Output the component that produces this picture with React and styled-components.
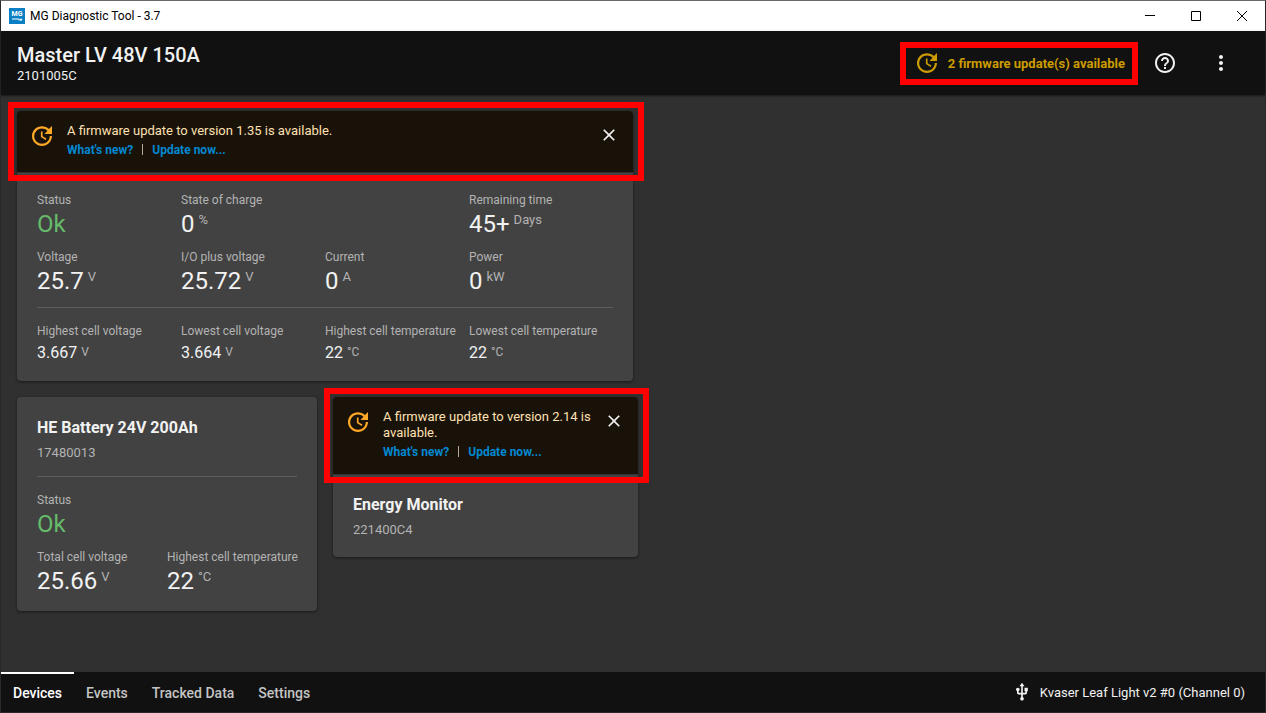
import React from "react";
import styled, { createGlobalStyle, css } from "styled-components";
import { MdHelpOutline, MdMoreVert, MdClose, MdUsb } from "react-icons/md";

const GlobalStyle = createGlobalStyle`
  *, *::before, *::after { box-sizing: border-box; }
  body { margin: 0; background: #2b2829; font-family: Roboto, "Liberation Sans", sans-serif; color: #f2f2f2; }
  button { font: inherit; color: inherit; background: none; border: 0; padding: 0; cursor: pointer; }
  h1, h2, p, dl, dt, dd { margin: 0; font-weight: inherit; }
  svg { display: block; flex: none; }
`;

const Window = styled.div`
  min-height: 100vh;
  display: flex;
  flex-direction: column;
  border: 1px solid #2b2829;
  border-top-color: #6b6869;
  background: #303030;
`;

const TitleBar = styled.div`
  height: 30px;
  display: flex;
  align-items: center;
  padding-left: 8px;
  background: #fff;
  color: #000;
  font-size: 12px;
  line-height: 16px;
`;

const WindowTitle = styled.span`
  flex: 1;
  padding-left: 5px;
`;

const WindowButton = styled.button`
  width: 46px;
  height: 30px;
  display: grid;
  place-items: center;
`;

const Header = styled.header`
  height: 64px;
  display: flex;
  align-items: center;
  padding: 0 16px;
  background: #111;
  box-shadow: 0 1px 2px rgba(0, 0, 0, 0.5);
`;

const DeviceTitle = styled.div`
  flex: 1;
  h1 { font-size: 20px; line-height: 26px; font-weight: 500; }
  p { font-size: 13px; line-height: 16px; }
`;

const marked = css`
  position: relative;
  &::after {
    content: "";
    position: absolute;
    border: 6px solid #f00;
    pointer-events: none;
    z-index: 1;
  }
`;

const UpdatesButton = styled.button`
  ${marked}
  display: flex;
  align-items: center;
  gap: 9px;
  height: 36px;
  margin-right: 12px;
  color: #cc9c00;
  font-size: 13px;
  font-weight: 700;
  &::after { inset: -3px -13px -4px -15px; }
`;

const IconButton = styled.button`
  width: 56px;
  height: 56px;
  display: grid;
  place-items: center;
`;

const Main = styled.main`
  flex: 1;
  display: flex;
  flex-direction: column;
  align-items: flex-start;
  gap: 16px;
  padding: 16px;
`;

const CardRow = styled.div`
  display: flex;
  align-items: flex-start;
  flex-wrap: wrap;
  gap: 16px;
`;

const Card = styled.section`
  width: ${(p) => p.$width}px;
  max-width: 100%;
  border-radius: 4px;
  background: #424242;
  box-shadow: 0 1px 3px rgba(0, 0, 0, 0.5);
`;

const CardBody = styled.div`
  padding: 20px 20px 16px;
`;

const CardName = styled.h2`
  font-size: 16px;
  line-height: 22px;
  font-weight: 700;
`;

const Serial = styled.p`
  margin-top: 3px;
  font-size: 13px;
  line-height: 22px;
  color: #b3b3b3;
`;

const Divider = styled.hr`
  height: 1px;
  margin: 12px 0 15px;
  border: 0;
  background: #5e5e5e;
`;

const Metrics = styled.dl`
  display: grid;
  grid-template-columns: repeat(${(p) => p.$columns}, 1fr);
  row-gap: 11px;
`;

const MetricCell = styled.div`
  min-width: 0;
  grid-column-end: span ${(p) => p.$span || 1};
  white-space: nowrap;
  dt { font-size: 12px; line-height: 16px; color: #b3b3b3; }
`;

const MetricValue = styled.dd`
  display: flex;
  align-items: flex-start;
  gap: 4px;
  padding-top: 2px;
  font-size: ${(p) => (p.$small ? 16 : 24)}px;
  line-height: ${(p) => (p.$small ? 24 : 28)}px;
  color: ${(p) => (p.$ok ? "#66bb6a" : "#f2f2f2")};
`;

const Unit = styled.span`
  font-size: ${(p) => (p.$small ? 12 : 13)}px;
  line-height: ${(p) => (p.$small ? 22 : 20)}px;
  color: #b3b3b3;
`;

const Notice = styled.div`
  ${marked}
  display: flex;
  align-items: flex-start;
  gap: 13px;
  padding: 12px 14px 14px 13px;
  border-radius: 4px 4px 0 0;
  background: #191208;
  box-shadow: 0 1px 0 #333;
  &::after { inset: -9px -11px -9px -9px; }
`;

const NoticeText = styled.div`
  flex: 1;
  font-size: 13px;
  line-height: 16px;
  color: #ffe0b2;
`;

const NoticeLinks = styled.div`
  display: flex;
  gap: 8px;
  margin-top: 3px;
  font-size: 12px;
  color: #b3b3b3;
  a { color: #0288d1; font-weight: 700; text-decoration: none; }
`;

const LinkRule = styled.span`
  width: 1px;
  height: 11px;
  margin: 2px 1px 0;
  background: #b3aa98;
`;

const CloseButton = styled.button`
  width: 20px;
  height: 24px;
  display: grid;
  place-items: center;
`;

const Footer = styled.footer`
  height: 40px;
  display: flex;
  align-items: stretch;
  padding-right: 20px;
  background: #111;
`;

const Tabs = styled.nav`
  flex: 1;
  display: flex;
`;

const Tab = styled.button`
  padding: 0 12px;
  border-top: 2px solid ${(p) => (p.$active ? "#fff" : "transparent")};
  border-bottom: 1px solid transparent;
  color: ${(p) => (p.$active ? "#fff" : "#c4c4c4")};
  font-size: 14px;
  font-weight: 500;
`;

const Connection = styled.div`
  display: flex;
  align-items: center;
  gap: 8px;
  font-size: 13px;
`;

const NoticeIcon = styled.span`
  padding-top: 1px;
  color: #ffa726;
`;

function UpdateIcon() {
  return (
    <svg width="24" height="24" viewBox="1.2 1.2 21.6 21.6" fill="currentColor" aria-hidden="true">
      <path d="M21 10.12H14.22L16.96 7.3C14.23 4.6 9.81 4.5 7.08 7.2C4.35 9.91 4.35 14.28 7.08 17C9.81 19.7 14.23 19.7 16.96 17C18.32 15.65 19 14.08 19 12.1H21C21 14.08 20.12 16.65 18.36 18.39C14.85 21.87 9.15 21.87 5.64 18.39C2.14 14.92 2.11 9.28 5.62 5.81C9.13 2.34 14.76 2.34 18.27 5.81L21 3V10.12M12.5 8V12.25L16 14.33L15.28 15.54L11 13V8H12.5Z" />
    </svg>
  );
}

function AppLogo() {
  return (
    <svg width="16" height="16" viewBox="0 0 16 16" aria-hidden="true">
      <rect width="16" height="16" fill="#0a7fc4" />
      <text x="8" y="8" textAnchor="middle" fontFamily="Roboto" fontSize="7" fontWeight="700" fill="#fff">MG</text>
      <path d="M3 10.5h7v1H3zM10 11.2h1.5V10L13.5 11.7 11.5 13.2V12.2H9z" fill="#fff" />
    </svg>
  );
}

function Metric({ label, value, unit, small, ok, span }) {
  return (
    <MetricCell $span={span}>
      <dt>{label}</dt>
      <MetricValue $small={small} $ok={ok}>
        {value}
        {unit && <Unit $small={small}>{unit}</Unit>}
      </MetricValue>
    </MetricCell>
  );
}

function UpdateNotice({ version }) {
  return (
    <Notice role="status">
      <NoticeIcon><UpdateIcon /></NoticeIcon>
      <NoticeText>
        <p>{`A firmware update to version ${version} is available.`}</p>
        <NoticeLinks>
          <a href="#whats-new">What's new?</a>
          <LinkRule />
          <a href="#update">Update now...</a>
        </NoticeLinks>
      </NoticeText>
      <CloseButton aria-label="Dismiss"><MdClose size={20} /></CloseButton>
    </Notice>
  );
}

const tabs = ["Devices", "Events", "Tracked Data", "Settings"];

export default function App() {
  return (
    <>
      <GlobalStyle />
      <Window>
        <TitleBar>
          <AppLogo />
          <WindowTitle>MG Diagnostic Tool - 3.7</WindowTitle>
          <WindowButton aria-label="Minimize">
            <svg width="10" height="10" stroke="#000"><path d="M0 4.5h10" /></svg>
          </WindowButton>
          <WindowButton aria-label="Maximize">
            <svg width="10" height="10" stroke="#000" fill="none"><path d="M.5.5h9v9h-9z" /></svg>
          </WindowButton>
          <WindowButton aria-label="Close">
            <svg width="10" height="10" stroke="#000"><path d="M0 0l10 10M10 0L0 10" /></svg>
          </WindowButton>
        </TitleBar>
        <Header>
          <DeviceTitle>
            <h1>Master LV 48V 150A</h1>
            <p>2101005C</p>
          </DeviceTitle>
          <UpdatesButton><UpdateIcon />2 firmware update(s) available</UpdatesButton>
          <IconButton aria-label="Help"><MdHelpOutline size={24} /></IconButton>
          <IconButton aria-label="More"><MdMoreVert size={24} /></IconButton>
        </Header>
        <Main>
          <Card $width={616}>
            <UpdateNotice version="1.35" />
            <CardBody>
              <Metrics $columns={4}>
                <Metric label="Status" value="Ok" ok />
                <Metric label="State of charge" value="0" unit="%" span={2} />
                <Metric label="Remaining time" value="45+" unit="Days" />
                <Metric label="Voltage" value="25.7" unit="V" />
                <Metric label="I/O plus voltage" value="25.72" unit="V" />
                <Metric label="Current" value="0" unit="A" />
                <Metric label="Power" value="0" unit="kW" />
              </Metrics>
              <Divider />
              <Metrics $columns={4}>
                <Metric small label="Highest cell voltage" value="3.667" unit="V" />
                <Metric small label="Lowest cell voltage" value="3.664" unit="V" />
                <Metric small label="Highest cell temperature" value="22" unit="°C" />
                <Metric small label="Lowest cell temperature" value="22" unit="°C" />
              </Metrics>
            </CardBody>
          </Card>
          <CardRow>
            <Card $width={300}>
              <CardBody>
                <CardName>HE Battery 24V 200Ah</CardName>
                <Serial>17480013</Serial>
                <Divider />
                <Metrics $columns={2}>
                  <Metric label="Status" value="Ok" ok span={2} />
                  <Metric label="Total cell voltage" value="25.66" unit="V" />
                  <Metric label="Highest cell temperature" value="22" unit="°C" />
                </Metrics>
              </CardBody>
            </Card>
            <Card $width={305}>
              <UpdateNotice version="2.14" />
              <CardBody>
                <CardName>Energy Monitor</CardName>
                <Serial>221400C4</Serial>
              </CardBody>
            </Card>
          </CardRow>
        </Main>
        <Footer>
          <Tabs>
            {tabs.map((name, i) => (
              <Tab key={name} $active={i === 0}>{name}</Tab>
            ))}
          </Tabs>
          <Connection><MdUsb size={20} />Kvaser Leaf Light v2 #0 (Channel 0)</Connection>
        </Footer>
      </Window>
    </>
  );
}
